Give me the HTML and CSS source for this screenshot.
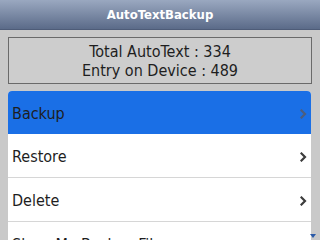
FILE: index.html
```html
<!DOCTYPE html>
<html lang="en">
<head>
  <meta charset="UTF-8">
  <title>AutoTextBackup</title>
  <link rel="stylesheet" href="styles.css">
</head>
<body>

<header class="title-bar">AutoTextBackup</header>

<div class="screen">
  <!-- Counters -->
  <div class="info-box">
    <p>Total AutoText : 334</p>
    <p>Entry on Device : 489</p>
  </div>

  <!-- Menu list -->
  <ul class="menu">
    <li class="selected">Backup<svg class="chev" width="7" height="10" viewBox="0 0 7 10"><polyline points="1.5,1.5 5,5 1.5,8.5"/></svg></li>
    <li>Restore<svg class="chev" width="7" height="10" viewBox="0 0 7 10"><polyline points="1.5,1.5 5,5 1.5,8.5"/></svg></li>
    <li>Delete<svg class="chev" width="7" height="10" viewBox="0 0 7 10"><polyline points="1.5,1.5 5,5 1.5,8.5"/></svg></li>
    <li>Show My Backup Files<svg class="chev" width="7" height="10" viewBox="0 0 7 10"><polyline points="1.5,1.5 5,5 1.5,8.5"/></svg></li>
  </ul>
</div>

<span class="scroll-hint"></span>

</body>
</html>
```

FILE: styles.css
```css
html, body {
  margin: 0;
  padding: 0;
  height: 240px;
  overflow: hidden;
}
body {
  background-color: #c9c9c9;
  font-family: "DejaVu Sans Condensed", "DejaVu Sans", sans-serif;
  font-stretch: condensed;
  color: #1e1e1e;
  position: relative;
}
.title-bar {
  height: 30px;
  line-height: 30px;
  text-align: center;
  color: #fff;
  font-weight: bold;
  font-size: 13px;
  background: linear-gradient(#9aa8c0, #5b6b89);
  border-bottom: 1px solid #4e5c78;
  box-sizing: border-box;
}
.screen {
  padding: 7px 8px 0 8px;
}
.info-box {
  background-color: #cdcdcd;
  border: 1px solid #6a6a6a;
  height: 47px;
  box-sizing: border-box;
  padding-top: 4px;
  text-align: center;
  font-size: 16px;
  line-height: 19px;
}
.info-box p {
  margin: 0;
}
.menu {
  list-style: none;
  margin: 7px 1px 0 0;
  padding: 0;
  background-color: #fff;
  border-radius: 4px 4px 0 0;
  overflow: hidden;
}
.menu li {
  height: 44px;
  display: flex;
  align-items: center;
  justify-content: space-between;
  padding: 2px 4px 0 4px;
  font-size: 16px;
  border-bottom: 1px solid #d6d6d6;
  box-sizing: border-box;
}
.menu li.selected {
  background-color: #1a6fe6;
  border-bottom: none;
  height: 43px;
}
.chev {
  fill: none;
  stroke: #3c3c3c;
  stroke-width: 2.2;
  stroke-linecap: square;
}
.selected .chev {
  stroke: #4d5e7c;
}
/* little scroll arrow in the bottom corner */
.scroll-hint {
  position: absolute;
  right: 4px;
  bottom: 2px;
  width: 0;
  height: 0;
  border-left: 3px solid transparent;
  border-right: 3px solid transparent;
  border-top: 4px solid #2a5aa8;
}
```
